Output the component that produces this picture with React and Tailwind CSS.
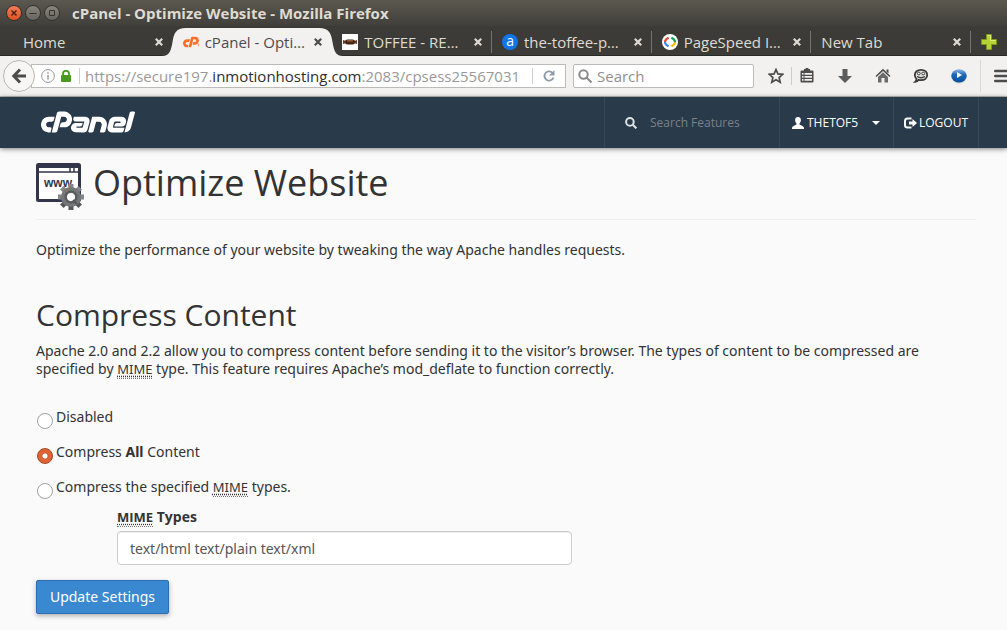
import { useState } from "react";
import clsx from "clsx";
import { SiCpanel } from "react-icons/si";

const CpanelMark = () => (
  <span className="flex h-3 w-4 shrink-0 items-center overflow-hidden text-[#ff6c2c]">
    <SiCpanel className="size-12 shrink-0" />
  </span>
);

const ToffeeIcon = () => (
  <svg viewBox="0 0 16 16" className="size-4 shrink-0" aria-hidden="true">
    <rect width="16" height="16" fill="#fff" />
    <path d="M1 6l3 1v2l-3 1zM15 6l-3 1v2l3 1z" fill="#6b3d24" />
    <rect x="3" y="5.500" width="10" height="5" rx="2.500" fill="#4a2412" />
    <rect x="5" y="6.300" width="6" height="1.200" rx=".6" fill="#a4714c" />
  </svg>
);

const AIcon = () => (
  <span className="flex size-4 shrink-0 items-center justify-center rounded-full bg-[#1075e6] pb-px text-sm leading-none text-white">
    a
  </span>
);

const PageSpeedIcon = () => (
  <svg viewBox="0 0 16 16" className="size-4 shrink-0" fill="none" strokeWidth="2.200" aria-hidden="true">
    <circle cx="8" cy="8" r="8" fill="#fff" />
    <path d="M6.600 3.600L4.400 5.200Q3 6.400 3 8" stroke="#ea4335" />
    <path d="M3 8Q3 9.600 4.400 10.800L6.600 12.400" stroke="#4285f4" />
    <path d="M9.400 3.600l2.200 1.600Q13 6.400 13 8" stroke="#0f9d58" />
    <path d="M13 8q0 1.600-1.400 2.800l-2.200 1.600" stroke="#fbbc05" />
  </svg>
);

const tabs = [
  { title: "Home" },
  { title: "cPanel - Opti…", icon: <CpanelMark />, active: true },
  { title: "TOFFEE - RE…", icon: <ToffeeIcon />, divider: true },
  { title: "the-toffee-p…", icon: <AIcon />, divider: true },
  { title: "PageSpeed I…", icon: <PageSpeedIcon />, divider: true },
  { title: "New Tab", divider: true },
];

const TitleBar = () => (
  <div className="flex h-[26px] items-center bg-linear-to-b from-[#5b584f] to-[#403f3a] pl-1.5">
    <div className="flex items-center gap-[3px]">
      <button
        aria-label="Close"
        className="flex size-4 items-center justify-center rounded-full border border-[#33322e] bg-linear-to-b from-[#f37c58] to-[#e0501f] text-[#45220f]"
      >
        <svg viewBox="0 0 8 8" className="size-2" stroke="currentColor" strokeWidth="1.400">
          <path d="M1.500 1.500l5 5M6.500 1.500l-5 5" />
        </svg>
      </button>
      <button
        aria-label="Minimize"
        className="flex size-4 items-center justify-center rounded-full border border-[#33322e] bg-linear-to-b from-[#88867d] to-[#66645c] text-[#35342f]"
      >
        <svg viewBox="0 0 8 8" className="size-2" stroke="currentColor">
          <path d="M.5 4.500h7" />
        </svg>
      </button>
      <button
        aria-label="Maximize"
        className="flex size-4 items-center justify-center rounded-full border border-[#33322e] bg-linear-to-b from-[#88867d] to-[#66645c] text-[#35342f]"
      >
        <svg viewBox="0 0 8 8" className="size-2" fill="none" stroke="currentColor">
          <path d="M1.500 1.500h5v5h-5z" />
        </svg>
      </button>
    </div>
    <span className="ml-3 text-[15px] leading-5 font-bold whitespace-nowrap text-[#dfdbd2]">
      cPanel - Optimize Website - Mozilla Firefox
    </span>
  </div>
);

const Tab = ({ title, icon, active, divider }) => (
  <div
    className={clsx(
      "relative flex min-w-0 flex-1 items-center px-2.5 pt-0.5",
      active ? "z-10 text-[#4c4c4c]" : "text-[#dfdbd2]"
    )}
  >
    {active && (
      <div className="absolute -inset-x-[11px] top-0.5 -bottom-px flex text-[#f2f1f0]">
        <svg viewBox="0 0 24 28" preserveAspectRatio="none" className="h-full w-6" fill="currentColor">
          <path d="M0 28C8 28 9 22 10.500 14C12 5 14 0 24 0V28Z" />
        </svg>
        <div className="-mx-px flex-1 bg-[#f2f1f0]" />
        <svg viewBox="0 0 24 28" preserveAspectRatio="none" className="h-full w-6" fill="currentColor">
          <path d="M24 28C16 28 15 22 13.500 14C12 5 10 0 0 0V28Z" />
        </svg>
      </div>
    )}
    <div className="relative flex min-w-0 flex-1 items-center gap-1.5">
      {icon}
      <span className="min-w-0 flex-1 overflow-hidden text-[15px] leading-5 whitespace-nowrap">{title}</span>
      <button aria-label={`Close ${title}`} className="shrink-0">
        <svg viewBox="0 0 8 8" className="size-2" stroke="currentColor" strokeWidth="2.200">
          <path d="M.8 .8l6.400 6.400M7.200 .8l-6.400 6.400" />
        </svg>
      </button>
    </div>
    {divider && <span className="absolute right-0 h-[22px] w-px bg-[#76746c]" />}
  </div>
);

const TabStrip = () => (
  <div className="flex h-[30px] border-b border-[#2b2a27] bg-[#3c3b37] pl-[13px]">
    {tabs.map((tab) => (
      <Tab key={tab.title} {...tab} />
    ))}
    <button aria-label="Open a new tab" className="flex w-9 shrink-0 items-center justify-center pt-0.5">
      <svg viewBox="0 0 16 16" className="size-4" fill="#b5d334" stroke="#7d9a1b">
        <path d="M5.500 .5h5v5h5v5h-5v5h-5v-5h-5v-5h5z" />
        <path d="M6.500 1.500h3v5h5" fill="none" stroke="#d9ec7c" />
      </svg>
    </button>
  </div>
);

const ToolButton = ({ label, children }) => (
  <button aria-label={label} className="flex w-[38px] shrink-0 items-center justify-center text-[#4c4c4c]">
    <svg viewBox="0 0 16 16" className="size-4" fill="currentColor">
      {children}
    </svg>
  </button>
);

const Toolbar = () => (
  <div className="flex h-[41px] items-center overflow-hidden border-b border-[#bdbbb8] bg-[#f2f1f0] pl-[3px]">
    <button
      aria-label="Back"
      className="relative z-10 flex size-8 shrink-0 items-center justify-center rounded-full border border-[#bab8b5] bg-[#f7f6f5] text-[#4c4c4c]"
    >
      <svg viewBox="0 0 16 16" className="size-4" fill="none" stroke="currentColor" strokeWidth="3">
        <path d="M9 1.500L2.800 8L9 14.500M3 8h12" />
      </svg>
    </button>
    <div className="-ml-1 flex h-6 min-w-0 flex-1 items-center border border-[#bdbbb8] bg-white pl-[9px]">
      <svg viewBox="0 0 14 14" className="size-3.5 shrink-0" fill="none" stroke="#999" aria-hidden="true">
        <circle cx="7" cy="7" r="6.400" />
        <path d="M7 6v4.500M7 3.300v1.500" strokeWidth="1.500" />
      </svg>
      <svg viewBox="0 0 10 12" className="ml-1.5 h-3 w-2.5 shrink-0" aria-hidden="true">
        <rect y="5" width="10" height="7" rx="1" fill="#4a9a21" />
        <path d="M2 6V3.800a3 3 0 0 1 6 0V6" fill="none" stroke="#4a9a21" strokeWidth="1.800" />
      </svg>
      <span className="ml-2 h-4 w-px shrink-0 bg-[#cfcfcf]" />
      <div
        role="textbox"
        aria-label="Address"
        contentEditable
        suppressContentEditableWarning
        spellCheck={false}
        className="ml-[5px] min-w-0 flex-1 overflow-hidden text-[15px] leading-5 whitespace-nowrap text-[#999]"
      >
        https://secure197.<span className="text-[#2e2e2e]">inmotionhosting.com</span>:2083/cpsess25567031
      </div>
      <button
        aria-label="Reload"
        className="flex h-4 w-[33px] shrink-0 items-center justify-center border-l border-[#cfcfcf] text-[#8c9aa8]"
      >
        <svg viewBox="0 0 12 12" className="size-3">
          <path d="M9.600 3A4.600 4.600 0 1 0 10.400 7.500" fill="none" stroke="currentColor" strokeWidth="1.800" />
          <path d="M11.500 0v5.500H6z" fill="currentColor" />
        </svg>
      </button>
    </div>
    <label className="ml-[7px] flex h-6 w-[181px] shrink-0 items-center rounded-xs border border-[#bdbbb8] bg-white pl-1">
      <svg viewBox="0 0 14 14" className="size-3.5 shrink-0" fill="none" stroke="#8a8a8a" strokeWidth="2">
        <circle cx="5.500" cy="5.500" r="4.200" />
        <path d="M8.500 8.500l5 5" />
      </svg>
      <input
        type="text"
        aria-label="Search the web"
        placeholder="Search"
        className="ml-[5px] w-full min-w-0 text-[15px] leading-5 outline-none placeholder:text-[#8f8f8f]"
      />
    </label>
    <button aria-label="Bookmark this page" className="ml-3.5 shrink-0 text-[#4c4c4c]">
      <svg viewBox="0 0 16 16" className="size-4" fill="none" stroke="currentColor" strokeWidth="1.700">
        <path d="M8 1.500l1.900 4.400 4.800.4-3.600 3.200 1.100 4.700L8 11.700l-4.200 2.500 1.100-4.700L1.300 6.300l4.800-.4z" />
      </svg>
    </button>
    <span className="ml-[7px] h-[18px] w-px shrink-0 bg-[#cfcdca]" />
    <div className="-ml-1 flex shrink-0">
      <ToolButton label="Bookmarks">
        <path
          fillRule="evenodd"
          d="M5 1h1.500a1.500 1.500 0 0 1 3 0H11v1.500h2.500a1 1 0 0 1 1 1v10a1 1 0 0 1-1 1h-11a1 1 0 0 1-1-1v-10a1 1 0 0 1 1-1H5zM3 5v1.800h1.500V5zM5.500 5v1.800H13V5zM3 8v1.800h1.500V8zM5.500 8v1.800H13V8zM3 11v1.800h1.500V11zM5.500 11v1.800H13V11z"
        />
      </ToolButton>
      <ToolButton label="Downloads">
        <path d="M5.500 1h5v7H15L8 15 1 8h4.500z" fill="#5c5c5c" />
      </ToolButton>
      <ToolButton label="Home page">
        <path d="M8 .8L15.500 8l-1 1L8 2.900 1.500 9l-1-1zM11.500 1.500h2v4l-2-2z" />
        <path d="M8 4.200l5 4.800v5.500H9.500V10h-3v4.500H3V9z" fill="#6a6a6a" />
      </ToolButton>
      <ToolButton label="Chat">
        <path
          d="M8 1.800c3.700 0 6.200 2.100 6.200 5.200s-2.500 5.200-6.200 5.200c-1 0-1.700-.1-2.400-.3-.7 1.300-1.900 1.900-3.400 1.900 1-.9 1.300-1.800 1.200-3C2.300 9.800 1.800 8.500 1.800 7c0-3.100 2.500-5.200 6.200-5.200z"
          fill="#e4e3e2"
          stroke="#3a3a3a"
          strokeWidth="1.800"
        />
        <circle cx="5.800" cy="5.500" r="1.400" fill="#fff" stroke="#3a3a3a" />
        <circle cx="10.200" cy="5.500" r="1.400" fill="#fff" stroke="#3a3a3a" />
        <path d="M4 8.500q4 2.400 8 0" fill="none" stroke="#3a3a3a" strokeWidth="1.400" />
      </ToolButton>
      <ToolButton label="Media player">
        <defs>
          <linearGradient id="ball" x1="0" y1="0" x2="0" y2="1">
            <stop offset="0" stopColor="#8fb9e8" />
            <stop offset=".4" stopColor="#2467b5" />
            <stop offset="1" stopColor="#0a4c97" />
          </linearGradient>
        </defs>
        <ellipse cx="8" cy="9" rx="7" ry="6.600" fill="#c4cdd6" />
        <ellipse cx="8" cy="7.800" rx="7.800" ry="6.600" fill="url(#ball)" />
        <path d="M6 4l5 3-5 3z" fill="#fff" />
      </ToolButton>
    </div>
    <span className="ml-0.5 h-8 w-px shrink-0 bg-[#dbd9d6]" />
    <button aria-label="Open menu" className="-mr-[3px] ml-[13px] shrink-0 text-[#4c4c4c]">
      <svg viewBox="0 0 16 14" className="h-3.5 w-4" stroke="currentColor" strokeWidth="2.400" strokeLinecap="round">
        <path d="M1.200 2h14M1.200 7h14M1.200 12h14" />
      </svg>
    </button>
  </div>
);

const Header = () => (
  <header className="relative flex h-[51px] items-stretch bg-[#293a4a] pr-7 pl-10 text-xs text-white shadow-[0_1px_5px_rgba(0,0,0,0.5)]">
    <a href="#home" aria-label="cPanel" className="flex items-center pb-0.5 pl-px">
      <span className="flex h-6 w-[94px] items-center overflow-hidden">
        <SiCpanel className="size-[94px] shrink-0" />
      </span>
    </a>
    <label className="ml-auto flex w-[175px] items-center border-l border-[#34495a] pl-5">
      <svg viewBox="0 0 12 12" className="size-3 shrink-0" fill="none" stroke="#dfe3e6" strokeWidth="2">
        <circle cx="4.900" cy="4.900" r="3.800" />
        <path d="M7.800 7.800l3.600 3.600" />
      </svg>
      <input
        type="text"
        aria-label="Search features"
        placeholder="Search Features"
        className="ml-[13px] w-full min-w-0 outline-none placeholder:text-[#7b8187]"
      />
    </label>
    <button className="flex w-[114px] items-center border-l border-[#34495a] pl-3">
      <svg viewBox="0 0 12 12" className="size-3" fill="currentColor">
        <path d="M6 0c1.800 0 2.900 1.300 2.900 3.100 0 1.400-.6 2.700-1.400 3.400v1c.6.600 4.500 1.600 4.500 3.300V12H0v-1.200c0-1.700 3.900-2.700 4.500-3.300v-1C3.700 5.800 3.100 4.500 3.100 3.100 3.100 1.300 4.200 0 6 0z" />
      </svg>
      <span className="ml-[3px]">THETOF5</span>
      <svg viewBox="0 0 8 4" className="ml-3.5 h-1 w-2" fill="currentColor">
        <path d="M0 0h8L4 4z" />
      </svg>
    </button>
    <a href="#logout" className="flex w-[86px] items-center border-x border-[#34495a] pl-2.5">
      <svg viewBox="0 0 13 12" className="h-3 w-[13px]" fill="none" stroke="currentColor" strokeWidth="2">
        <path d="M7.500 1.500H3.500Q1 1.500 1 4v4q0 2.500 2.500 2.500h4" />
        <path d="M5 4.500h3.500V2L13 6l-4.500 4V7.500H5z" fill="currentColor" stroke="none" />
      </svg>
      <span className="ml-0.5">LOGOUT</span>
    </a>
  </header>
);

const teeth = [0, 45, 90, 135, 180, 225, 270, 315];

const OptimizeIcon = () => (
  <svg viewBox="0 0 48 48" className="size-12 shrink-0" aria-hidden="true">
    <rect x="1.500" y="1.500" width="42" height="36" rx="1" fill="#fff" stroke="#33364a" strokeWidth="3" />
    <path d="M1 1h43v4H1z" fill="#33364a" />
    <path d="M2 9h41" stroke="#33364a" strokeWidth="1.500" />
    <path d="M34 5v4M38 5v4" stroke="#33364a" strokeWidth="1.500" />
    <text
      x="22"
      y="24"
      textAnchor="middle"
      fontSize="12"
      className="font-['Liberation_Sans',sans-serif] font-bold"
      fill="#33364a"
    >
      www
    </text>
    <g transform="translate(35 34)">
      {teeth.map((deg) => (
        <rect
          key={deg}
          x="-2.500"
          y="-13"
          width="5"
          height="6"
          fill={deg > 90 && deg < 270 ? "#58585a" : "#85868a"}
          transform={`rotate(${deg})`}
        />
      ))}
      <circle r="7" fill="#fff" stroke="#75767a" strokeWidth="6" />
      <circle r="5.500" fill="none" stroke="#58585a" strokeWidth="2" />
      <path d="M2 3L6 7" stroke="#58585a" strokeWidth="2" />
    </g>
  </svg>
);

const Mime = () => (
  <abbr
    title="Multipurpose Internet Mail Extensions"
    className="border-b border-dotted border-[#777] text-[13px] leading-4 underline decoration-dotted underline-offset-2"
  >
    MIME
  </abbr>
);

const options = [
  { value: "disabled", label: "Disabled" },
  {
    value: "all",
    label: (
      <>
        Compress <b>All</b> Content
      </>
    ),
  },
  {
    value: "list",
    label: (
      <>
        Compress the specified <Mime /> types.
      </>
    ),
  },
];

const CompressForm = () => {
  const [mode, setMode] = useState("all");
  const [types, setTypes] = useState("text/html text/plain text/xml");

  return (
    <form onSubmit={(e) => e.preventDefault()} className="mt-[30px]">
      <div className="flex flex-col gap-[17px]">
        {options.map(({ value, label }) => (
          <label key={value} className="flex h-[18px] items-start gap-[3px]">
            <input
              type="radio"
              name="compress"
              value={value}
              checked={mode === value}
              onChange={() => setMode(value)}
              className="mt-[5px] ml-px size-4 shrink-0 appearance-none rounded-full border border-[#a3a3a3] bg-white checked:border-[#a9451f] checked:bg-[radial-gradient(circle,#fff_2px,#dd6236_3px)]"
            />
            <span>{label}</span>
          </label>
        ))}
      </div>
      <div className="mt-3 ml-[81px] max-w-[455px]">
        <label htmlFor="mime-types" className="block font-['Open_Sans',sans-serif] font-bold">
          <Mime /> Types
        </label>
        <input
          id="mime-types"
          type="text"
          value={types}
          onChange={(e) => setTypes(e.target.value)}
          className="mt-[5px] block h-[34px] w-full rounded-sm border border-[#ccc] bg-white px-3 text-[#555] shadow-[inset_0_1px_1px_rgba(0,0,0,0.075)]"
        />
      </div>
      <button
        type="submit"
        className="mt-[15px] h-[34px] min-w-[133px] rounded-xs border border-[#2a6fb5] bg-[#3a89d0] px-3 text-white shadow-[0_2px_5px_rgba(0,0,0,0.3)]"
      >
        Update Settings
      </button>
    </form>
  );
};

export default function App() {
  return (
    <div className="min-h-screen bg-[#fafafa] font-['Open_Sans',sans-serif] text-[#333]">
      <TitleBar />
      <TabStrip />
      <Toolbar />
      <Header />
      <main className="pt-[15px] pr-[31px] pb-4 pl-9 font-['Noto_Sans',sans-serif] text-sm leading-[18px]">
        <div className="flex h-[57px] items-start gap-[9px] border-b border-[#eee]">
          <OptimizeIcon />
          <h1 className="font-['Open_Sans',sans-serif] text-4xl">Optimize Website</h1>
        </div>
        <p className="mt-[21px]">
          Optimize the performance of your website by tweaking the way Apache handles requests.
        </p>
        <h2 className="mt-10 font-['Open_Sans',sans-serif] text-[30px] leading-8">Compress Content</h2>
        <p className="mt-[11px]">
          Apache 2.0 and 2.2 allow you to compress content before sending it to the visitor’s browser. The types of
          content to be compressed are specified by <Mime /> type. This feature requires Apache’s mod_deflate to
          function correctly.
        </p>
        <CompressForm />
      </main>
    </div>
  );
}
